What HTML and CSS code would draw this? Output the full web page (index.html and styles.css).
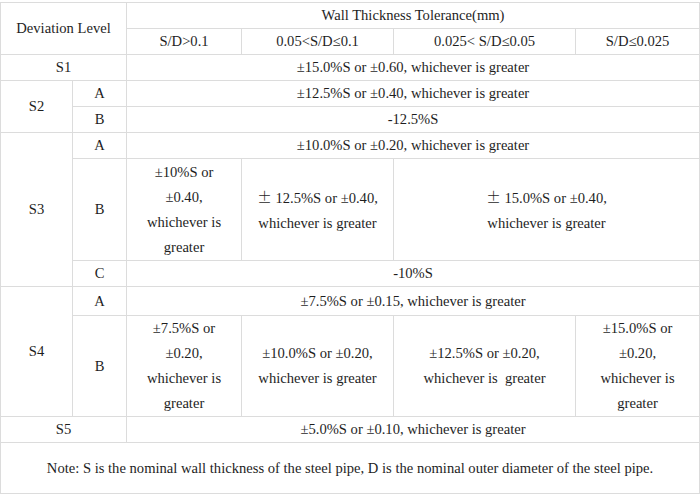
FILE: index.html
```html
<!DOCTYPE html>
<html>
<head>
<meta charset="utf-8">
<link rel="stylesheet" href="styles.css">
</head>
<body>
<table class="tol">
  <colgroup>
    <col class="c1"><col class="c2"><col class="c3"><col class="c4"><col class="c5"><col class="c6">
  </colgroup>
  <tr class="h26">
    <td colspan="2" rowspan="2">Deviation Level</td>
    <td colspan="4">Wall Thickness Tolerance(mm)</td>
  </tr>
  <tr class="h25">
    <td>S/D&gt;0.1</td>
    <td>0.05&lt;S/D≤0.1</td>
    <td>0.025&lt; S/D≤0.05</td>
    <td>S/D≤0.025</td>
  </tr>
  <tr class="h26">
    <td colspan="2">S1</td>
    <td colspan="4">±15.0%S or ±0.60, whichever is greater</td>
  </tr>
  <tr class="h26">
    <td rowspan="2">S2</td>
    <td>A</td>
    <td colspan="4">±12.5%S or ±0.40, whichever is greater</td>
  </tr>
  <tr class="h26">
    <td>B</td>
    <td colspan="4">-12.5%S</td>
  </tr>
  <tr class="h26">
    <td rowspan="3">S3</td>
    <td>A</td>
    <td colspan="4">±10.0%S or ±0.20, whichever is greater</td>
  </tr>
  <tr class="h103">
    <td>B</td>
    <td>±10%S or<br>±0.40,<br>whichever is<br>greater</td>
    <td><span class="pm">±</span> 12.5%S or ±0.40,<br>whichever is greater</td>
    <td colspan="2"><span class="pm">±</span> 15.0%S or ±0.40,<br>whichever is greater</td>
  </tr>
  <tr class="h25">
    <td>C</td>
    <td colspan="4">-10%S</td>
  </tr>
  <tr class="h30">
    <td rowspan="2">S4</td>
    <td>A</td>
    <td colspan="4">±7.5%S or ±0.15, whichever is greater</td>
  </tr>
  <tr class="h102">
    <td>B</td>
    <td>±7.5%S or<br>±0.20,<br>whichever is<br>greater</td>
    <td>±10.0%S or ±0.20,<br>whichever is greater</td>
    <td>±12.5%S or ±0.20,<br>whichever is&nbsp; greater</td>
    <td>±15.0%S or<br>±0.20,<br>whichever is<br>greater</td>
  </tr>
  <tr class="h26">
    <td colspan="2">S5</td>
    <td colspan="4">±5.0%S or ±0.10, whichever is greater</td>
  </tr>
  <tr class="h51">
    <td colspan="6">Note: S is the nominal wall thickness of the steel pipe, D is the nominal outer diameter of the steel pipe.</td>
  </tr>
</table>
</body>
</html>
```

FILE: styles.css
```css
html, body {
  margin: 0;
  padding: 0;
  background: #ffffff;
}
body {
  padding-top: 2px;
}
.tol {
  border-collapse: collapse;
  table-layout: fixed;
  width: 699px;
  font-family: "Liberation Serif", "Times New Roman", serif;
  font-size: 14.6px;
  color: #1e1e1e;
}
.tol td {
  border: 1px solid #dcdcdc;
  text-align: center;
  vertical-align: middle;
  padding: 0;
  line-height: 25px;
}
.c1 { width: 72px; }
.c2 { width: 54px; }
.c3 { width: 115px; }
.c4 { width: 152px; }
.c5 { width: 182px; }
.c6 { width: 124px; }
.h25 { height: 25px; }
.h26 { height: 26px; }
.h30 { height: 29px; }
.h51 { height: 51px; }
.h102 { height: 101px; }
.h103 { height: 102px; }
.pm {
  font-family: "Noto Sans CJK SC", sans-serif;
  font-weight: 300;
}
```
